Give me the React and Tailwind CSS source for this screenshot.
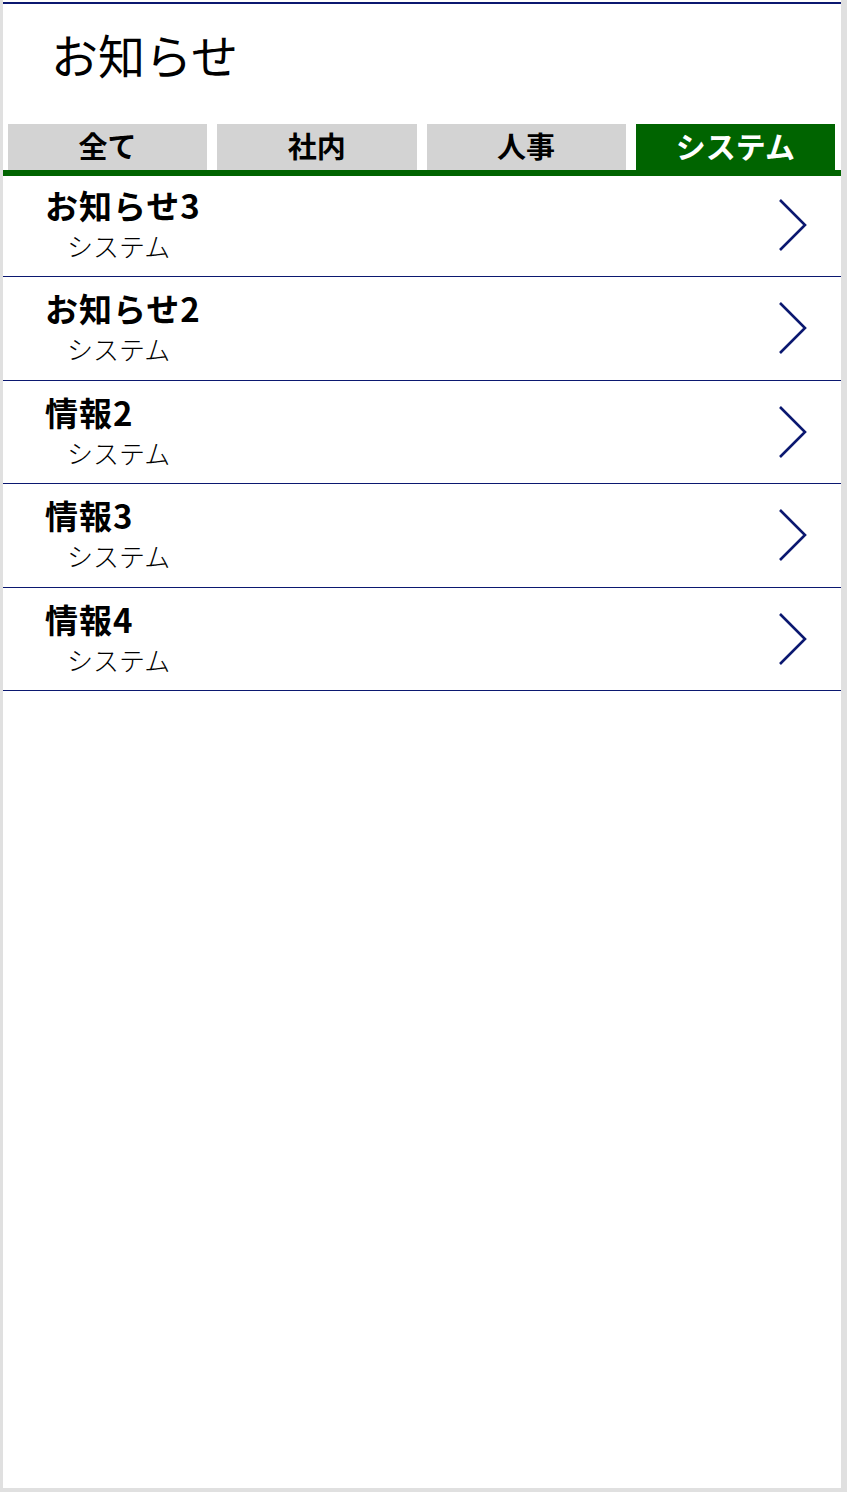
const tabs = ['全て', '社内', '人事', 'システム']
const items = ['お知らせ3', 'お知らせ2', '情報2', '情報3', '情報4']

function Chevron() {
  return (
    <svg width="32" height="54" viewBox="0 0 32 54" fill="none">
      <path d="M3 2 L28 27 L3 52" stroke="#0b1870" strokeWidth="2.6" />
    </svg>
  )
}

export default function App() {
  return (
    <div
      className="w-[847px] h-[1492px] bg-[#e0e0e0] pl-[3px] pr-[6px] pb-[4px]"
      style={{ fontFamily: '"Noto Sans CJK JP", "Noto Sans", sans-serif' }}
    >
      <div className="h-full bg-white pt-[2px] flex flex-col">
        <div className="h-[122px] border-t-2 border-[#0b1870] pl-[48px] pt-[26px]">
          <h1 className="text-[47px] leading-none font-normal text-black">お知らせ</h1>
        </div>

        <div className="grid grid-cols-4 gap-[10px] pl-[5px] pr-[6px] h-[46px]">
          {tabs.map((t, i) => (
            <div
              key={t}
              className={
                i === 3
                  ? 'h-[46px] pb-[4px] bg-[#006400] text-white text-[30px] font-bold flex items-center justify-center leading-none'
                  : 'h-[46px] pb-[4px] bg-[#d3d3d3] text-black text-[29px] font-bold flex items-center justify-center leading-none'
              }
            >
              {t}
            </div>
          ))}
        </div>
        <div className="h-[6px] bg-[#006400]" />

        <ul className="-mt-[2.5px]">
          {items.map((name) => (
            <li
              key={name}
              className="h-[103.5px] border-b border-[#0b1870] flex justify-between pl-[42px] pr-[32px]"
            >
              <div className="flex flex-col pt-[9px]">
                <span className="text-[33px] font-bold leading-[44px] tracking-[1px] text-black">{name}</span>
                <span className="text-[26px] font-light leading-[30px] mt-[4px] pl-[22px] text-black">システム</span>
              </div>
              <div className="self-center">
                <Chevron />
              </div>
            </li>
          ))}
        </ul>
      </div>
    </div>
  )
}
